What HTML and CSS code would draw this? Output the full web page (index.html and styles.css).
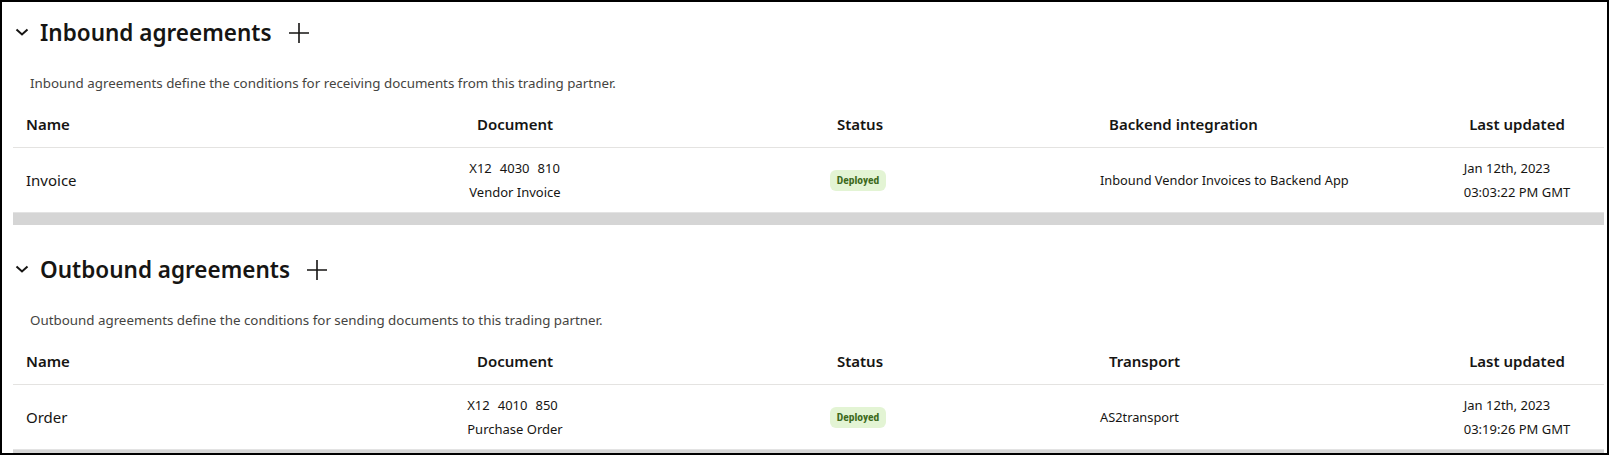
FILE: index.html
```html
<!DOCTYPE html>
<html lang="en">
<head>
<meta charset="utf-8">
<title>Agreements</title>
<link rel="stylesheet" href="styles.css">
</head>
<body>
<div class="frame">
  <section class="agreements">
    <div class="section-head">
      <svg class="chevron" viewBox="0 0 14 8" width="14" height="8"><path d="M1.5 1.5 L7 6.5 L12.5 1.5" fill="none" stroke="#161513" stroke-width="2"/></svg>
      <h2 class="section-title">Inbound agreements</h2>
      <svg class="plus" viewBox="0 0 20 20" width="20" height="20"><path d="M10 0 V20 M0 10 H20" fill="none" stroke="#161513" stroke-width="1.6"/></svg>
    </div>
    <p class="desc">Inbound agreements define the conditions for receiving documents from this trading partner.</p>
    <div class="table">
      <div class="row head">
        <div class="cell c-name">Name</div>
        <div class="cell c-doc">Document</div>
        <div class="cell c-status">Status</div>
        <div class="cell c-left">Backend integration</div>
        <div class="cell c-date">Last updated</div>
      </div>
      <div class="row data">
        <div class="cell c-name name-text">Invoice</div>
        <div class="cell c-doc"><div class="stack"><div><span class="tok">X12</span><span class="tok">4030</span><span class="tok">810</span></div><div>Vendor Invoice</div></div></div>
        <div class="cell c-status"><span class="badge">Deployed</span></div>
        <div class="cell c-left">Inbound Vendor Invoices to Backend App</div>
        <div class="cell c-date"><div class="stack"><div>Jan 12th, 2023</div><div>03:03:22 PM GMT</div></div></div>
      </div>
    </div>
    <div class="bar"></div>
  </section>

  <section class="agreements next">
    <div class="section-head">
      <svg class="chevron" viewBox="0 0 14 8" width="14" height="8"><path d="M1.5 1.5 L7 6.5 L12.5 1.5" fill="none" stroke="#161513" stroke-width="2"/></svg>
      <h2 class="section-title">Outbound agreements</h2>
      <svg class="plus" viewBox="0 0 20 20" width="20" height="20"><path d="M10 0 V20 M0 10 H20" fill="none" stroke="#161513" stroke-width="1.6"/></svg>
    </div>
    <p class="desc">Outbound agreements define the conditions for sending documents to this trading partner.</p>
    <div class="table">
      <div class="row head">
        <div class="cell c-name">Name</div>
        <div class="cell c-doc">Document</div>
        <div class="cell c-status">Status</div>
        <div class="cell c-left">Transport</div>
        <div class="cell c-date">Last updated</div>
      </div>
      <div class="row data">
        <div class="cell c-name name-text">Order</div>
        <div class="cell c-doc"><div class="stack"><div><span class="tok">X12</span><span class="tok">4010</span><span class="tok">850</span></div><div>Purchase Order</div></div></div>
        <div class="cell c-status"><span class="badge">Deployed</span></div>
        <div class="cell c-left">AS2transport</div>
        <div class="cell c-date"><div class="stack"><div>Jan 12th, 2023</div><div>03:19:26 PM GMT</div></div></div>
      </div>
    </div>
    <div class="bar"></div>
  </section>
</div>
</body>
</html>
```

FILE: styles.css
```css
* { box-sizing: border-box; }

html, body {
  margin: 0;
  padding: 0;
  background: #ffffff;
}

body {
  font-family: "Noto Sans", "Open Sans", sans-serif;
  color: #161513;
}

.frame {
  width: 1609px;
  height: 455px;
  border: 2px solid #000;
  overflow: hidden;
  padding: 0 3px 0 11px;
  background: #fff;
}

.agreements {
  padding-top: 15px;
}

.agreements.next {
  padding-top: 29px;
}

.section-head {
  display: flex;
  align-items: center;
  height: 32px;
  padding-left: 2px;
}

.chevron {
  display: block;
  margin-right: 11px;
  margin-top: -2px;
}

.section-title {
  margin: 0;
  font-size: 22.5px;
  font-weight: 600;
  line-height: 32px;
  color: #161513;
}

.plus {
  display: block;
  margin-left: 17px;
}

.desc {
  margin: 24px 0 0 0;
  padding-left: 17px;
  font-size: 13.35px;
  line-height: 20px;
  color: #454441;
}

.table {
  margin-top: 8px;
}

.row {
  display: grid;
  grid-template-columns: 387px 230px 460px 350px 154px;
  align-items: center;
}

.row.head {
  height: 47px;
  border-bottom: 1px solid #e4e3e1;
  font-size: 15px;
  font-weight: 600;
}

.row.data {
  height: 64px;
  font-size: 13px;
}

.cell.c-name {
  padding-left: 13px;
}

.name-text {
  font-size: 15px;
}

.cell.c-doc,
.cell.c-status,
.cell.c-date {
  display: flex;
  justify-content: center;
}

.row.head .c-left {
  padding-left: 19px;
}

.row.data .c-left {
  padding-left: 10px;
  font-size: 12.8px;
}

.stack {
  line-height: 24px;
}

.tok {
  margin-right: 8px;
}

.tok:last-child {
  margin-right: 0;
}

.badge {
  display: inline-flex;
  align-items: center;
  justify-content: center;
  width: 56px;
  height: 21px;
  margin-right: 4px;
  border-radius: 6px;
  background: #e3f4d4;
  color: #3e6a1c;
  font-family: "Liberation Sans Narrow", "Roboto Condensed", "Noto Sans", sans-serif;
  font-stretch: condensed;
  font-size: 11.5px;
  font-weight: 700;
}

.bar {
  height: 13px;
  background: #d5d5d5;
  border-top: 1px solid #e3e3e3;
}
```
